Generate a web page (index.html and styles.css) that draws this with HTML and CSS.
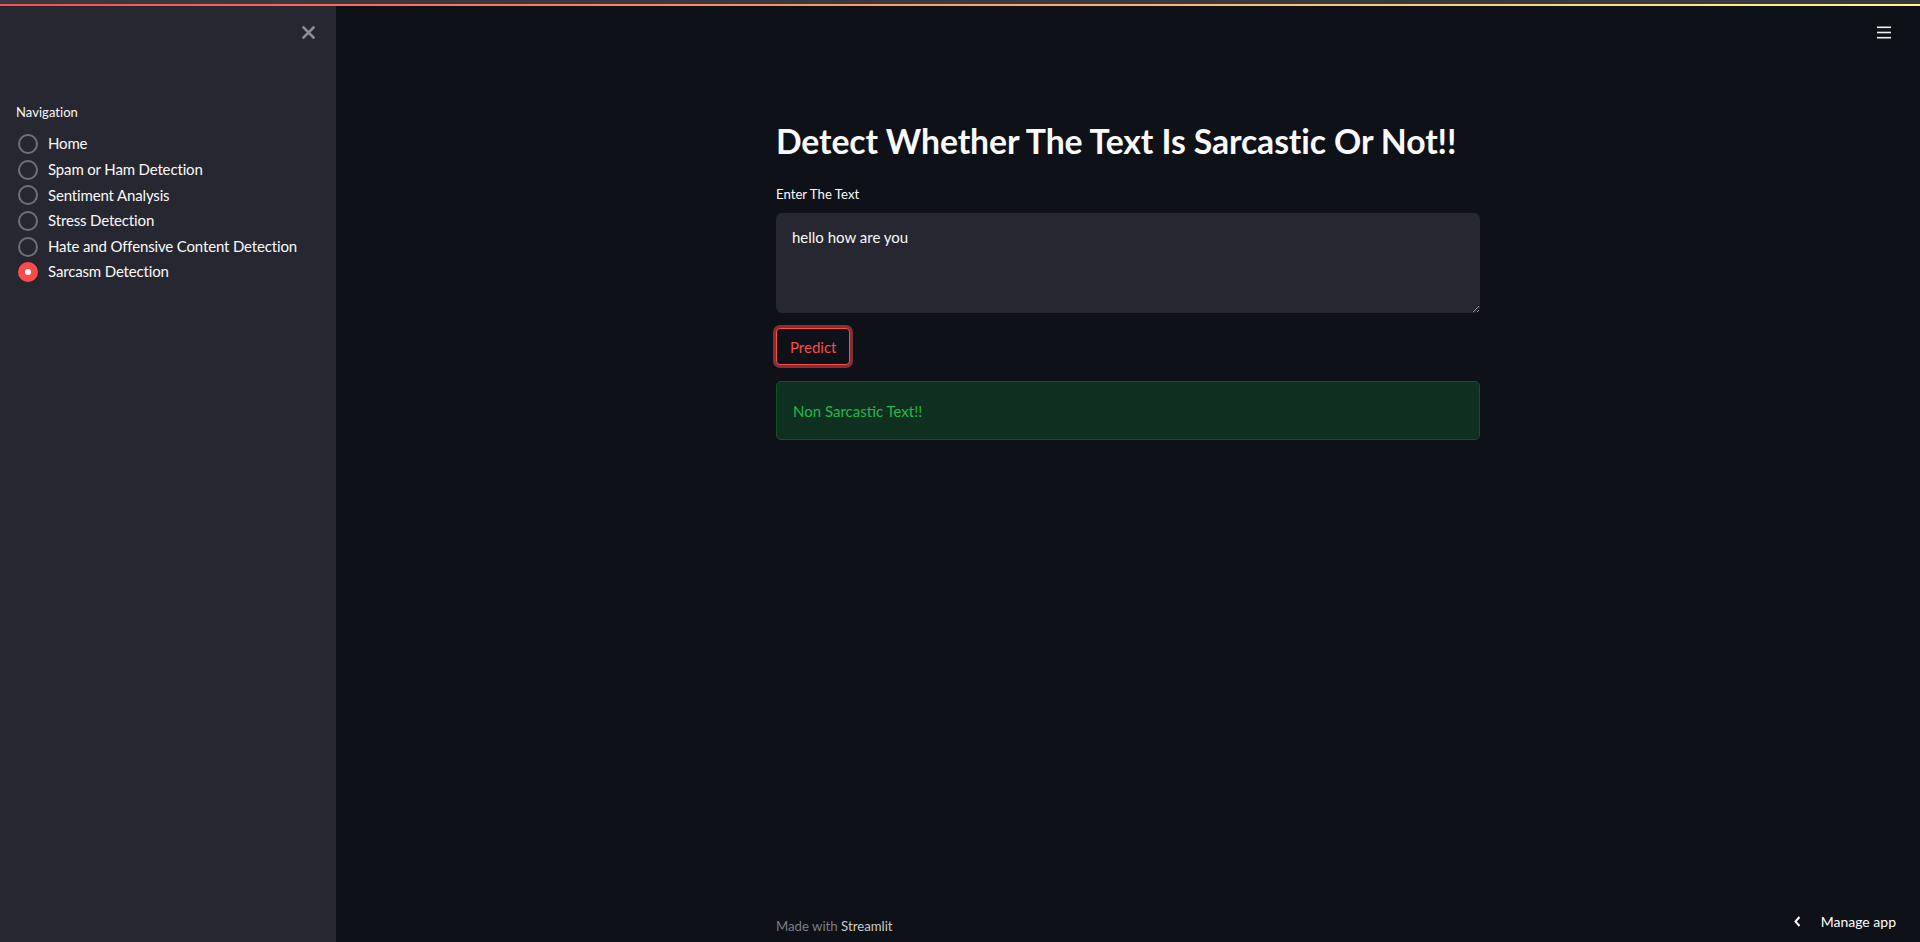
FILE: index.html
```html
<!DOCTYPE html>
<html lang="en">
<head>
<meta charset="utf-8">
<title>Sarcasm Detection</title>
<link rel="stylesheet" href="styles.css">
</head>
<body>
<div class="top-strip"></div>
<div class="decoration"></div>
<div class="app">
  <aside class="sidebar">
    <div class="sidebar-head">
      <svg class="close-icon" width="13" height="13" viewBox="0 0 13 13"><path d="M1.5 1.5 L11.5 11.5 M11.5 1.5 L1.5 11.5" stroke="#8b8d95" stroke-width="2.6" stroke-linecap="square"/></svg>
    </div>
    <div class="nav">
      <div class="nav-label">Navigation</div>
      <div class="radio-list">
        <div class="radio-row"><span class="radio"></span><span class="radio-text">Home</span></div>
        <div class="radio-row"><span class="radio"></span><span class="radio-text">Spam or Ham Detection</span></div>
        <div class="radio-row"><span class="radio"></span><span class="radio-text">Sentiment Analysis</span></div>
        <div class="radio-row"><span class="radio"></span><span class="radio-text">Stress Detection</span></div>
        <div class="radio-row"><span class="radio"></span><span class="radio-text">Hate and Offensive Content Detection</span></div>
        <div class="radio-row"><span class="radio radio-on"><span class="dot"></span></span><span class="radio-text">Sarcasm Detection</span></div>
      </div>
    </div>
  </aside>
  <main class="main">
    <svg class="menu-icon" width="14" height="13" viewBox="0 0 14 13"><rect x="0" y="0.5" width="14" height="1.6" fill="#f0f0f2"/><rect x="0" y="5.7" width="14" height="1.6" fill="#f0f0f2"/><rect x="0" y="10.9" width="14" height="1.6" fill="#f0f0f2"/></svg>
    <div class="content">
      <h1 class="title">Detect Whether The Text Is Sarcastic Or Not!!</h1>
      <label class="field-label" for="txt">Enter The Text</label>
      <textarea id="txt" class="textarea">hello how are you</textarea>
      <button class="predict">Predict</button>
      <div class="success">Non Sarcastic Text!!</div>
    </div>
    <div class="spacer"></div>
    <footer class="footer"><span class="made">Made with</span> <span class="brand">Streamlit</span></footer>
    <div class="manage">
      <svg width="7" height="11" viewBox="0 0 7 11"><path d="M5.5 1 L1.5 5.5 L5.5 10" fill="none" stroke="#ffffff" stroke-width="2"/></svg>
      <span>Manage app</span>
    </div>
  </main>
</div>
</body>
</html>
```

FILE: styles.css
```css
* { box-sizing: border-box; }
html, body { margin: 0; padding: 0; height: 100%; }
body {
  background: #0e1117;
  color: #fafafa;
  font-family: Lato, "Open Sans", sans-serif;
  overflow: hidden;
  display: flex;
  flex-direction: column;
}
.top-strip { height: 4px; background: #363842; flex: none; }
.decoration { height: 2px; background: linear-gradient(90deg, #ff4b4b, #fffd80); flex: none; }
.app { flex: 1; display: flex; min-height: 0; }

.sidebar {
  width: 336px;
  flex: none;
  background: #262730;
  display: flex;
  flex-direction: column;
}
.sidebar-head {
  display: flex;
  justify-content: flex-end;
  padding: 20px 21px 0 0;
}
.close-icon { display: block; }
.nav { margin-top: 62px; padding: 0 16px; }
.nav-label { font-size: 13px; line-height: 22.4px; color: #fafafa; margin-bottom: 8px; letter-spacing: 0.05px; }
.radio-list { display: flex; flex-direction: column; }
.radio-row { display: flex; align-items: center; height: 25.6px; }
.radio {
  width: 20px; height: 20px; border-radius: 50%;
  border: 2px solid #6f717a;
  margin-left: 2px; margin-right: 10px;
  flex: none;
  display: flex; align-items: center; justify-content: center;
}
.radio-on { background: #ff4b4b; border-color: #ff4b4b; }
.dot { width: 6px; height: 6px; border-radius: 50%; background: #ffffff; }
.radio-text { font-size: 15px; letter-spacing: -0.15px; line-height: 25.6px; color: #fafafa; white-space: nowrap; }

.main {
  flex: 1;
  position: relative;
  display: flex;
  flex-direction: column;
  align-items: center;
}
.menu-icon { position: absolute; top: 20px; right: 29px; }
.content {
  width: 704px;
  padding-top: 114px;
  display: flex;
  flex-direction: column;
  align-items: flex-start;
}
.title {
  margin: 0;
  font-size: 33.75px;
  line-height: 43px;
  font-weight: 700;
  letter-spacing: -0.1px;
  color: #fafafa;
  white-space: nowrap;
}
.field-label {
  margin-top: 20px;
  font-size: 13.2px;
  line-height: 22.4px;
  color: #fafafa;
}
.textarea {
  margin-top: 8px;
  width: 100%;
  height: 100px;
  background: #262730;
  border: none;
  border-radius: 6px;
  padding: 13px 16px;
  color: #fafafa;
  font-family: inherit;
  font-size: 15px;
  line-height: 22px;
  resize: vertical;
  outline: none;
  color-scheme: dark;
}
.predict {
  margin-top: 15px;
  height: 37px;
  padding: 0 13px;
  background: #0e1117;
  border: 1px solid #ff4b4b;
  border-radius: 4px;
  box-shadow: 0 0 0 3px rgba(255, 75, 75, 0.5);
  color: #ff4b4b;
  font-family: inherit;
  font-size: 15px;
}
.success {
  margin-top: 16px;
  width: 100%;
  height: 59px;
  background: #0f3020;
  border: 1px solid #17502b;
  border-radius: 5px;
  padding: 0 16px;
  display: flex;
  align-items: center;
  color: #22b84c;
  font-size: 15px;
}
.spacer { flex: 1; }
.footer {
  width: 704px;
  height: 36px;
  font-size: 13.2px;
  line-height: 22px;
  padding-top: 9px;
  color: #7c7f88;
}
.brand { color: #c9cbd1; }
.manage {
  position: absolute;
  right: 24px;
  bottom: 12px;
  display: flex;
  align-items: center;
  gap: 20px;
  font-size: 14px;
  color: #ffffff;
}
```
